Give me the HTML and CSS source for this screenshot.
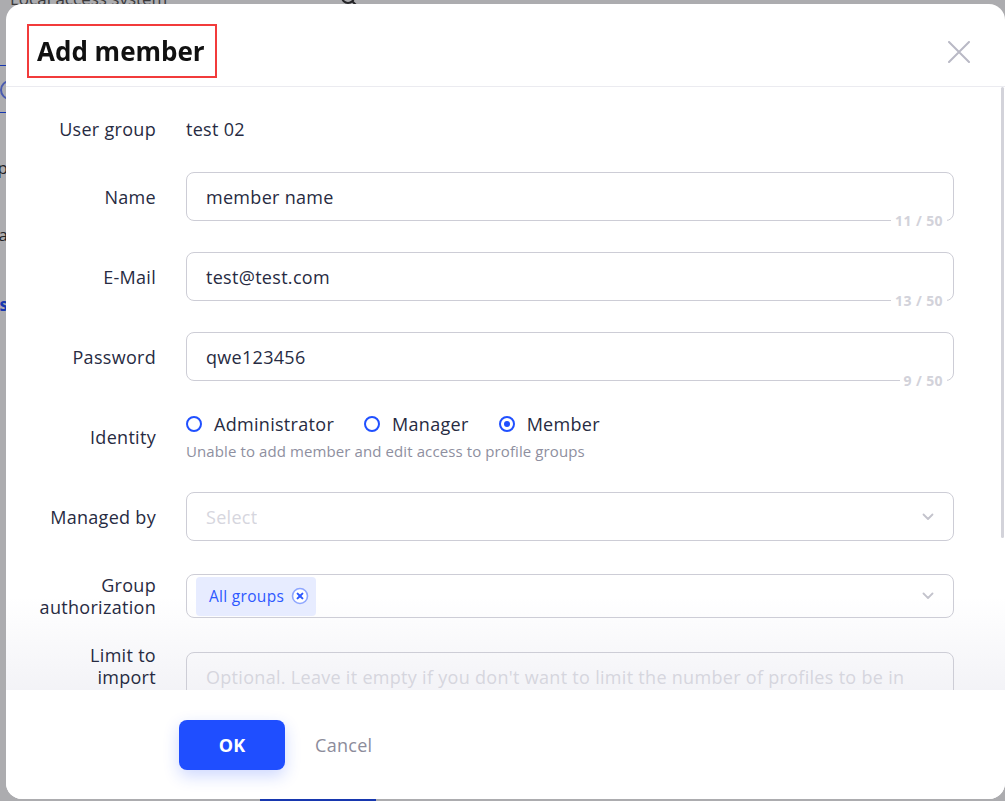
FILE: index.html
```html
<!DOCTYPE html>
<html lang="en">
<head>
    <meta charset="UTF-8">
    <meta name="viewport" content="width=device-width, initial-scale=1.0">
    <title>Add member</title>
    <link rel="stylesheet" href="styles.css">
</head>
<body>
    <!-- page behind the dialog -->
    <div class="page">
        <div class="page-top">
            <span class="page-brand">Local access system</span>
            <svg class="page-search" width="18" height="18" viewBox="0 0 18 18"><circle cx="8" cy="8" r="6" fill="none" stroke="#333" stroke-width="2"/><path d="M12.5 12.5l4 4" stroke="#333" stroke-width="2"/></svg>
        </div>
        <div class="page-side">
            <div class="side-line"></div>
            <div class="side-icon"><span></span></div>
            <div class="side-line side-line-b"></div>
            <div class="side-item side-a">Group</div>
            <div class="side-item side-b">Data</div>
            <div class="side-item side-link">Members</div>
        </div>
        <div class="page-tab"></div>
    </div>
    <div class="mask"></div>

    <div class="modal">
        <div class="modal-head">
            <h2 class="modal-title">Add member</h2>
            <button class="modal-close" type="button">
                <svg width="22" height="22" viewBox="0 0 22 22"><path d="M1 1L21 21M21 1L1 21" stroke="#b9b9c5" stroke-width="2" stroke-linecap="round"/></svg>
            </button>
        </div>

        <div class="modal-body">
            <div class="form">
                <div class="row row-plain">
                    <div class="row-label">User group</div>
                    <div class="row-ctrl">test 02</div>
                </div>

                <div class="row row-input">
                    <div class="row-label">Name</div>
                    <div class="row-ctrl field">
                        <span class="field-value">member name</span>
                        <span class="field-count">11 / 50</span>
                    </div>
                </div>

                <div class="row row-input">
                    <div class="row-label">E-Mail</div>
                    <div class="row-ctrl field">
                        <span class="field-value">test@test.com</span>
                        <span class="field-count">13 / 50</span>
                    </div>
                </div>

                <div class="row row-input">
                    <div class="row-label">Password</div>
                    <div class="row-ctrl field">
                        <span class="field-value">qwe123456</span>
                        <span class="field-count">9 / 50</span>
                    </div>
                </div>

                <div class="row row-identity">
                    <div class="row-label">Identity</div>
                    <div class="row-ctrl">
                        <div class="radios">
                            <label class="radio"><span class="radio-dot"></span>Administrator</label>
                            <label class="radio"><span class="radio-dot"></span>Manager</label>
                            <label class="radio"><span class="radio-dot checked"></span>Member</label>
                        </div>
                        <div class="hint">Unable to add member and edit access to profile groups</div>
                    </div>
                </div>

                <div class="row row-select">
                    <div class="row-label">Managed by</div>
                    <div class="row-ctrl field select">
                        <span class="placeholder">Select</span>
                        <svg class="chevron" width="12" height="8" viewBox="0 0 12 8"><path d="M1.5 1.5L6 6l4.5-4.5" fill="none" stroke="#c3c3cc" stroke-width="1.8" stroke-linecap="round" stroke-linejoin="round"/></svg>
                    </div>
                </div>

                <div class="row row-tags">
                    <div class="row-label">Group<br>authorization</div>
                    <div class="row-ctrl field select tags">
                        <span class="tag">All groups
                            <svg width="18" height="18" viewBox="0 0 18 18"><circle cx="9" cy="9" r="7.5" fill="#fff" stroke="#8ea6ff" stroke-width="1.6"/><path d="M6.6 6.6l4.8 4.8M11.4 6.6l-4.8 4.8" stroke="#2d58ff" stroke-width="2" stroke-linecap="round"/></svg>
                        </span>
                        <svg class="chevron" width="12" height="8" viewBox="0 0 12 8"><path d="M1.5 1.5L6 6l4.5-4.5" fill="none" stroke="#c3c3cc" stroke-width="1.8" stroke-linecap="round" stroke-linejoin="round"/></svg>
                    </div>
                </div>

                <div class="row row-limit">
                    <div class="row-label">Limit to<br>import</div>
                    <div class="row-ctrl field area">
                        <span class="placeholder">Optional. Leave it empty if you don't want to limit the number of profiles to be in this group.</span>
                    </div>
                </div>
            </div>
            <div class="scroll-thumb"></div>
        </div>

        <div class="modal-foot">
            <button class="btn-ok" type="button">OK</button>
            <button class="btn-cancel" type="button">Cancel</button>
        </div>
    </div>
</body>
</html>
```

FILE: styles.css
```css
* {
    box-sizing: border-box;
}

body {
    margin: 0;
    height: 100vh;
    overflow: hidden;
    background: #fff;
    font-family: "Open Sans", "Noto Sans", sans-serif;
    color: #272b42;
}

/* page under the mask */
.page {
    height: 100vh;
    display: flex;
    flex-direction: column;
}

.page-top {
    display: flex;
    align-items: center;
    height: 20px;
    margin-top: -12px;
    padding-left: 10px;
}

.page-brand {
    font-size: 17px;
    color: #555;
    width: 330px;
}

.page-side {
    width: 8px;
    overflow: hidden;
    margin-top: 57px;
    display: flex;
    flex-direction: column;
}

.side-line {
    height: 1px;
    background: #2050ff;
    width: 8px;
}

.side-line-b {
    margin-top: 12px;
}

.side-icon {
    height: 20px;
    display: flex;
    justify-content: flex-end;
    margin-top: 14px;
}

.side-icon span {
    width: 20px;
    height: 20px;
    flex-shrink: 0;
    border: 2px solid #6d86ff;
    border-radius: 50%;
    margin-right: -12px;
}

.side-item {
    display: flex;
    justify-content: flex-end;
    white-space: nowrap;
    font-size: 17px;
    line-height: 23px;
    color: #333;
}

.side-a {
    margin-top: 43px;
}

.side-b {
    margin-top: 44px;
}

.side-link {
    color: #2050ff;
    font-weight: 700;
    margin-top: 47px;
}

.page-tab {
    margin-top: auto;
    margin-left: 260px;
    width: 116px;
    height: 2px;
    background: #2050ff;
}

.mask {
    position: fixed;
    inset: 0;
    background: rgba(6, 6, 14, 0.335);
}

/* dialog */
.modal {
    position: fixed;
    left: 6px;
    top: 4px;
    width: 999px;
    height: 795px;
    background: #fff;
    border-radius: 16px;
    overflow: hidden;
    display: flex;
    flex-direction: column;
}

.modal-head {
    height: 83px;
    flex-shrink: 0;
    display: flex;
    justify-content: space-between;
    align-items: flex-start;
    padding: 20px 0 0 21px;
    border-bottom: 1px solid #ebebf0;
}

.modal-title {
    margin: 0;
    height: 54px;
    line-height: 50px;
    padding: 0 10px 0 8px;
    border: 2px solid #f23b3b;
    font-size: 26px;
    font-weight: 700;
    color: #111;
}

.modal-close {
    margin: 17px 35px 0 0;
    padding: 0;
    border: 0;
    background: none;
    width: 22px;
    height: 22px;
}

.modal-close svg {
    display: block;
}

.modal-body {
    flex: 1;
    position: relative;
    overflow: hidden;
    padding-top: 32px;
    background: linear-gradient(to bottom, #fff 0, #fff 510px, #f3f3f7 100%);
}

.scroll-thumb {
    position: absolute;
    right: 1px;
    top: 0;
    width: 3px;
    height: 451px;
    background: #d3d3da;
    border-radius: 2px;
}

.row {
    display: flex;
    align-items: center;
}

.row-label {
    width: 150px;
    flex-shrink: 0;
    margin-right: 30px;
    text-align: right;
    font-size: 18px;
    line-height: 22px;
    letter-spacing: 0.3px;
}

.row-plain {
    margin-top: -1px;
}

.row-ctrl {
    width: 768px;
    font-size: 18px;
    line-height: 22px;
    letter-spacing: 0.3px;
}

.row-input {
    margin-top: 31px;
}

.row-plain + .row-input {
    margin-top: 32px;
}

.row-identity {
    margin-top: 32px;
}

.row-select {
    margin-top: 32px;
}

.row-tags {
    margin-top: 33px;
}

.row-limit {
    margin-top: 34px;
    align-items: flex-start;
}

.row-limit .row-label {
    margin-top: -8px;
}

.field {
    position: relative;
    height: 49px;
    display: flex;
    align-items: center;
    padding: 0 19px;
    border: 1px solid #cdcdd6;
    border-radius: 8px;
}

.field-count {
    position: absolute;
    right: 6px;
    bottom: -10px;
    padding: 0 4px;
    background: #fff;
    font-size: 14px;
    line-height: 18px;
    font-weight: 700;
    letter-spacing: 0.4px;
    color: #d2d2da;
}

.placeholder {
    color: #d6d6de;
    white-space: nowrap;
    overflow: hidden;
}

.area {
    height: 80px;
    align-items: flex-start;
    padding-top: 13px;
    padding-right: 36px;
}

.area .placeholder {
    white-space: normal;
}

.select {
    justify-content: space-between;
}

.chevron {
    flex-shrink: 0;
}

.tags {
    height: 44px;
    padding-left: 9px;
}

.tag {
    display: flex;
    align-items: center;
    gap: 7px;
    height: 39px;
    padding: 0 7px 0 13px;
    background: #e7ecff;
    border-radius: 4px;
    font-size: 15.5px;
    letter-spacing: 0.3px;
    color: #2d58ff;
}

.radios {
    display: flex;
    align-items: center;
}

.radio {
    display: flex;
    align-items: center;
    gap: 12px;
    margin-right: 30px;
}

.radio-dot {
    width: 16px;
    height: 16px;
    border: 2px solid #2050ff;
    border-radius: 50%;
    display: flex;
    align-items: center;
    justify-content: center;
}

.radio-dot.checked::after {
    content: "";
    width: 6px;
    height: 6px;
    border-radius: 50%;
    background: #2050ff;
}

.hint {
    margin-top: 7px;
    font-size: 15px;
    line-height: 18px;
    letter-spacing: 0.1px;
    color: #8e8fa0;
}

/* footer */
.modal-foot {
    height: 109px;
    flex-shrink: 0;
    display: flex;
    align-items: flex-start;
    padding: 30px 0 0 173px;
    background: #fff;
}

.btn-ok {
    width: 106px;
    height: 50px;
    border: 0;
    border-radius: 8px;
    background: #1f4eff;
    color: #fff;
    font-family: inherit;
    font-size: 18px;
    font-weight: 700;
    box-shadow: 0 6px 16px rgba(31, 78, 255, 0.22);
}

.btn-cancel {
    margin-left: 22px;
    height: 50px;
    padding: 0 8px;
    border: 0;
    background: none;
    font-family: inherit;
    font-size: 18px;
    letter-spacing: 0.3px;
    color: #8c8c9b;
}
```
